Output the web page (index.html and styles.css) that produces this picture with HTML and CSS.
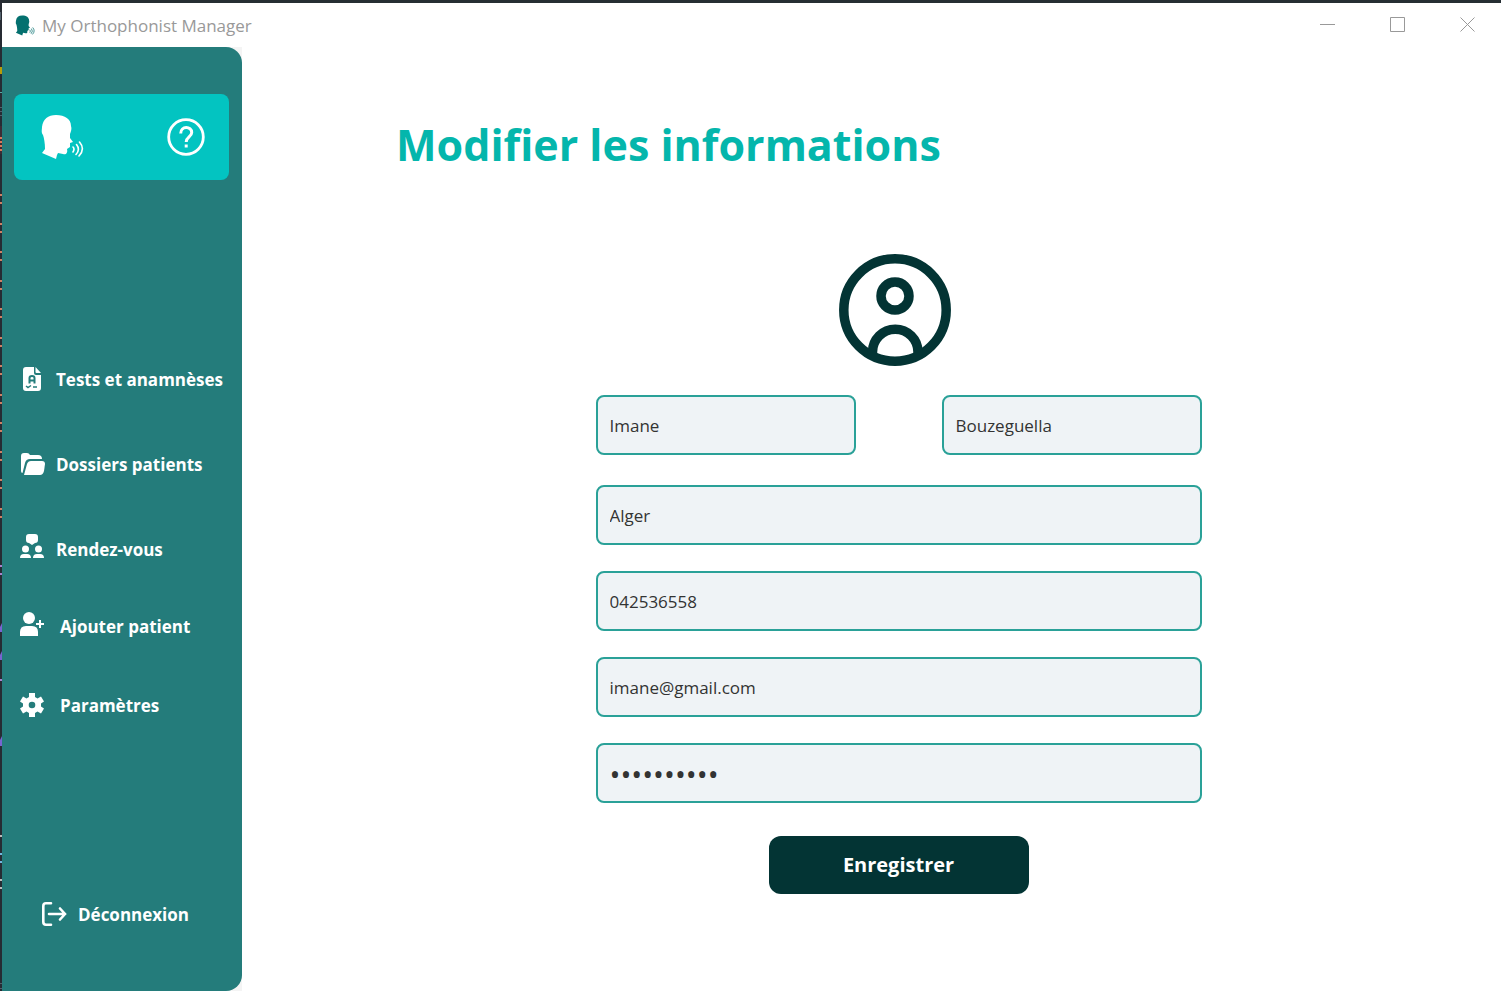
FILE: index.html
```html
<!DOCTYPE html>
<html lang="fr">
<head>
<meta charset="utf-8">
<title>My Orthophonist Manager</title>
<link rel="stylesheet" href="styles.css">
</head>
<body>
<svg class="symbols" aria-hidden="true">
  <symbol id="speaker" viewBox="0 0 44 46">
    <path fill="currentColor" d="M2 13C3 5 8 1 16 1c9 0 15 4 15 11 1 3 0 5-1 8v4l3 4-3 1v4l-3 2c1 4-1 6-4 5l-5-1-1 2-1 4-14-6 3-4c0-6-1-11-2-14-2-3-1-5-1-8z"/>
    <path fill="none" stroke="currentColor" stroke-width="1.6" stroke-linecap="round" d="M33 33q2 2 0 5M36.500 30.500q4 5-.5 10M39.500 28q6 7-.5 14"/>
  </symbol>
</svg>
<div class="desktop">
  <svg class="edge" viewBox="0 0 2 991" preserveAspectRatio="none" aria-hidden="true">
    <path fill="#262b33" d="M0 0h2v991H0z"/>
    <path fill="#53616c" d="M0 12h1v8H0zM0 107h2v1H0zM0 111h2v1H0zM0 115h2v1H0zM0 983h2v1H0zM0 988h2v1H0z"/>
    <path fill="#b89d08" d="M0 67h2v7H0z"/>
    <path fill="#5aa9a3" d="M0 92h2v1H0z"/>
    <path fill="#3c2c35" d="M0 126h2v28H0z"/>
    <path fill="#d9795a" d="M0 137h2v2H0zM0 141h2v2H0zM0 145h2v2H0zM0 149h2v2H0z"/>
    <path stroke="#d08064" stroke-width="2" d="M0 195h2M0 203h2M0 224h2M0 232h2M0 252h2M0 260h2M0 281h2M0 289h2M0 309h2M0 317h2M0 338h2M0 346h2M0 366h2M0 374h2M0 395h2M0 403h2M0 423h2M0 431h2M0 452h2M0 460h2M0 480h2M0 488h2M0 509h2M0 517h2"/>
    <path stroke="#a982d0" stroke-width="2" d="M0 566h2M0 574h2M0 680h2"/>
    <path fill="#7765d0" d="M0 627l2-4v9H0zM0 655l2-4v9H0zM0 740l2-4v10H0z"/>
    <path stroke="#bcbcbc" stroke-width="2" d="M0 836h2M0 880h2M0 888h2"/>
    <path stroke="#72b7e0" stroke-width="2" d="M0 854h2M0 862h2"/>
  </svg>
  <div class="window">
    <header class="titlebar">
      <svg class="app-icon" aria-hidden="true"><use href="#speaker"/></svg>
      <span class="app-name">My Orthophonist Manager</span>
      <button class="win-btn" type="button" aria-label="Réduire"><svg viewBox="0 0 16 16"><path d="M0 7.500h15"/></svg></button>
      <button class="win-btn" type="button" aria-label="Agrandir"><svg viewBox="0 0 16 16"><path d="M.5.500h14v14H.5z"/></svg></button>
      <button class="win-btn" type="button" aria-label="Fermer"><svg viewBox="0 0 16 16"><path d="M.5.500l14 14M14.500.500l-14 14"/></svg></button>
    </header>
    <div class="content">
      <div class="side-wrap">
        <aside class="sidebar">
          <div class="brand">
            <svg class="brand-logo" role="img" aria-label="My Orthophonist Manager"><use href="#speaker"/></svg>
            <button class="help" type="button" aria-label="Aide">
              <svg viewBox="0 0 38 38" fill="none" stroke="#fff"><circle cx="19" cy="19" r="17.300" stroke-width="2.800"/><path stroke-width="3" d="M13.700 15.500c0-8 11-7.500 11-1 0 4.500-5.500 4.500-5.500 9.500"/><path stroke-width="3" d="M17.700 28h3"/></svg>
            </button>
          </div>
          <nav class="nav">
            <a class="nav-link" href="#">
              <svg viewBox="0 0 24 24"><path fill="#fff" d="M6 0h8v6q0 2 2 2h5v13q0 3-3 3H6q-3 0-3-3V3q0-3 3-3z"/><path fill="#fff" d="M15.500 0L21 6h-4.500q-1 0-1-1z"/><g fill="none" stroke="#247c7b"><path stroke-width="2" d="M9.500 16.500V11q0-2 2.500-2t2.500 2v5.500M9.500 13.500h5"/><path stroke-width="1.500" d="M6 19l2 1.500 3-2M13 20h4"/></g></svg>
              Tests et anamnèses</a>
            <a class="nav-link" href="#">
              <svg viewBox="0 0 24 24"><path fill="#fff" d="M1 19V4q0-3 3-3h3q2 0 3 2h8q4 0 4 4H10q-4 0-5 4L2.500 21Q1 21 1 19z"/><path fill="#fff" d="M11 9h11q3 0 3 3l-1 7q-1 4-4 4H4l3-11q1-3 4-3z"/></svg>
              Dossiers patients</a>
            <a class="nav-link" href="#">
              <svg viewBox="0 3 24 24"><path fill="#fff" d="M9 0h6q3 0 3 3v3q0 3-3 3l-3 2-3-2Q6 9 6 6V3q0-3 3-3z"/><g fill="#fff"><circle cx="5.500" cy="15" r="3.500"/><circle cx="18.500" cy="15" r="3.500"/><path d="M0 24q0-4 4-4h3q4 0 4 4zM13 24q0-4 4-4h3q4 0 4 4z"/></g></svg>
              Rendez-vous</a>
          </nav>
          <nav class="nav nav-tools">
            <a class="nav-link" href="#">
              <svg viewBox="0 2 24 24"><g fill="#fff"><circle cx="9" cy="6" r="6"/><path d="M0 24v-4q0-6 6-6h6q6 0 6 6v4z"/><path d="M19 8h2v3h3v2h-3v3h-2v-3h-3v-2h3z"/></g></svg>
              Ajouter patient</a>
            <a class="nav-link" href="#">
              <svg viewBox="0 0 24 24"><path fill="#fff" fill-rule="evenodd" d="M9 0h6v4l2.500 1.500L21 3.500l3 5L21 10.500v3l3 2-3 5-3.500-2L15 20v4H9v-4l-2.500-1.500-3.500 2-3-5 3-2v-3L0 8.500l3-5 3.500 2L9 4zM12 8.700a3.300 3.300 0 1 0 0 6.600 3.300 3.300 0 0 0 0-6.600z"/></svg>
              Paramètres</a>
          </nav>
          <a class="nav-link logout" href="#">
            <svg viewBox="0 0 24 24" fill="none" stroke="#fff" stroke-width="2.600" stroke-linecap="round"><path d="M9 1.300H4Q1.300 1.300 1.300 4v16q0 2.700 2.700 2.700h5M7 12h16M18 6.500l5 5.500-5 5.500"/></svg>
            Déconnexion</a>
        </aside>
      </div>
      <main class="main">
        <h1 class="title">Modifier les informations</h1>
        <form class="form">
          <svg class="avatar" viewBox="0 0 112 112" fill="none" stroke="#033434" stroke-width="9.500" aria-hidden="true"><circle cx="56" cy="56" r="51.200"/><circle cx="56" cy="42" r="14"/><path d="M33.500 101V98a22.700 22.700 0 0 1 45.500 0v3"/></svg>
          <div class="names">
            <input class="field" type="text" aria-label="Prénom" value="Imane">
            <input class="field" type="text" aria-label="Nom" value="Bouzeguella">
          </div>
          <input class="field" type="text" aria-label="Adresse" value="Alger">
          <input class="field" type="tel" aria-label="Téléphone" value="042536558">
          <input class="field" type="email" aria-label="E-mail" value="imane@gmail.com">
          <input class="field password" type="password" aria-label="Mot de passe" value="motdepasse">
          <button class="save" type="button">Enregistrer</button>
        </form>
      </main>
    </div>
  </div>
</div>
</body>
</html>
```
FILE: styles.css
```css
* { box-sizing: border-box; }
body {
  margin: 0;
  font-family: "Open Sans", "Noto Sans", sans-serif;
  font-variant-ligatures: none;
  background: #262e33;
}
button, input { font: inherit; }
button { border: 0; padding: 0; background: none; cursor: pointer; }
.symbols { display: none; }
.desktop { display: flex; min-height: 100vh; padding-top: 3px; }
.edge { width: 2px; height: 100vh; margin-top: -3px; flex: none; }
.window { flex: 1; display: flex; flex-direction: column; background: #fff; }

.titlebar { display: flex; align-items: center; height: 44px; padding-left: 13px; }
.app-icon { width: 20px; height: 21px; margin-right: 7px; color: #04706f; }
.app-name { flex: 1; font-size: 17px; color: #999; }
.win-btn { width: 70px; height: 44px; padding-left: 4px; display: grid; place-items: center; }
.win-btn svg { width: 16px; height: 16px; fill: none; stroke: #999; }

.content { flex: 1; display: flex; }
.side-wrap { flex: none; display: flex; width: 240px; background: #f4f4f4; }
.sidebar {
  flex: 1;
  display: flex;
  flex-direction: column;
  padding: 47px 13px 65px 12px;
  border-radius: 0 16px 16px 0;
  background: #247c7b;
}
.brand {
  display: flex;
  align-items: center;
  justify-content: space-between;
  height: 86px;
  margin-bottom: 187px;
  padding: 0 24px 0 26px;
  border-radius: 8px;
  background: #03c4c1;
}
.brand-logo { width: 44px; height: 46px; color: #fff; }
.help { width: 38px; height: 38px; }
.help svg { display: block; }
.nav { display: flex; flex-direction: column; gap: 61px; padding-left: 6px; }
.nav-tools { gap: 55px; margin-top: 53px; }
.nav-link {
  display: flex;
  align-items: center;
  gap: 12px;
  height: 24px;
  font-size: 17px;
  font-weight: 700;
  white-space: nowrap;
  color: #fff;
  text-decoration: none;
}
.nav-link svg { flex: none; width: 24px; height: 24px; overflow: visible; }
.nav-tools .nav-link { gap: 16px; }
.logout { margin-top: auto; padding-left: 28px; }

.main { flex: 1; padding: 66px 0 0 54px; }
.title {
  margin: 0 0 77px 100px;
  font-size: 43px;
  line-height: 64px;
  color: #04b6ac;
}
.form {
  display: flex;
  flex-direction: column;
  gap: 26px;
  width: 606px;
  max-width: 100%;
  margin: 0 auto;
}
.avatar { width: 112px; height: 112px; margin: 0 auto 3px; padding-right: 0; }
.form .avatar { margin-left: 243px; }
.names { display: flex; justify-content: space-between; margin-bottom: 4px; }
.names .field { width: 260px; }
.field {
  width: 100%;
  height: 60px;
  padding: 0 12px;
  border: 2px solid #2aa198;
  border-radius: 8px;
  background: #eff3f6;
  font-size: 17px;
  color: #333;
}
.password { font-size: 29px; }
.save {
  width: 260px;
  height: 58px;
  margin: 7px auto 0;
  padding-bottom: 2px;
  border-radius: 12px;
  background: #033434;
  font-size: 20px;
  font-weight: 700;
  color: #fff;
}
```
